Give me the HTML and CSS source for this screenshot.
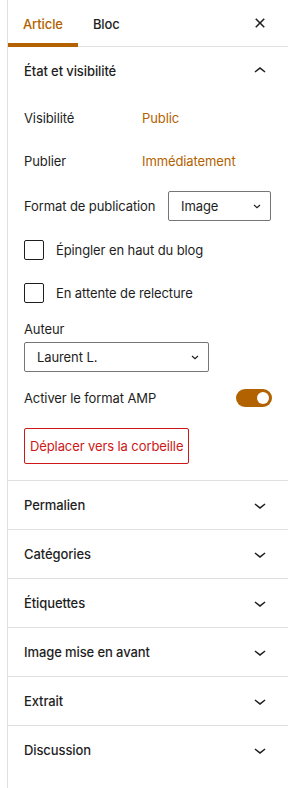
FILE: index.html
```html
<!DOCTYPE html>
<html lang="fr">
<head>
    <meta charset="UTF-8">
    <meta name="viewport" content="width=device-width, initial-scale=1.0">
    <title>Réglages de l'article</title>
    <link rel="stylesheet" href="styles.css">
</head>
<body>
    <div class="sidebar">
        <div class="sidebar-header">
            <button class="tab active">Article</button>
            <button class="tab">Bloc</button>
            <button class="icon-btn close-btn" aria-label="Fermer">
                <svg width="24" height="24" viewBox="0 0 24 24"><path d="M12 13.06l3.712 3.713 1.061-1.06L13.061 12l3.712-3.712-1.06-1.06L12 10.938 8.288 7.227l-1.061 1.06L10.939 12l-3.712 3.712 1.06 1.061L12 13.061z"/></svg>
            </button>
        </div>

        <div class="panel open">
            <div class="panel-title">
                <span>État et visibilité</span>
                <svg width="24" height="24" viewBox="0 0 24 24"><path d="M6.5 12.4L12 8l5.5 4.4-.9 1.2L12 10l-4.6 3.6-.9-1.2z"/></svg>
            </div>
            <div class="panel-body">
                <div class="row row-visibility">
                    <span class="row-label">Visibilité</span>
                    <a class="link" href="#">Public</a>
                </div>
                <div class="row row-publish">
                    <span class="row-label">Publier</span>
                    <a class="link" href="#">Immédiatement</a>
                </div>
                <div class="row row-format">
                    <span class="nowrap">Format de publication</span>
                    <div class="select select-format">
                        <span>Image</span>
                        <svg width="8" height="5" viewBox="0 0 8 5"><path d="M1 1l3 2.6L7 1" fill="none" stroke="#1e1e1e" stroke-width="1.2"/></svg>
                    </div>
                </div>
                <label class="check check-sticky">
                    <span class="check-box"></span>
                    <span>Épingler en haut du blog</span>
                </label>
                <label class="check check-pending">
                    <span class="check-box"></span>
                    <span>En attente de relecture</span>
                </label>
                <div class="field-label">Auteur</div>
                <div class="select select-author">
                    <span>Laurent L.</span>
                    <svg width="8" height="5" viewBox="0 0 8 5"><path d="M1 1l3 2.6L7 1" fill="none" stroke="#1e1e1e" stroke-width="1.2"/></svg>
                </div>
                <div class="row row-amp">
                    <span>Activer le format AMP</span>
                    <span class="toggle"><span class="toggle-thumb"></span></span>
                </div>
                <button class="trash-btn">Déplacer vers la corbeille</button>
            </div>
        </div>

        <div class="panel">
            <div class="panel-title">
                <span>Permalien</span>
                <svg width="24" height="24" viewBox="0 0 24 24"><path d="M17.5 11.6L12 16l-5.5-4.4.9-1.2L12 14l4.6-3.6z"/></svg>
            </div>
        </div>
        <div class="panel">
            <div class="panel-title">
                <span>Catégories</span>
                <svg width="24" height="24" viewBox="0 0 24 24"><path d="M17.5 11.6L12 16l-5.5-4.4.9-1.2L12 14l4.6-3.6z"/></svg>
            </div>
        </div>
        <div class="panel">
            <div class="panel-title">
                <span>Étiquettes</span>
                <svg width="24" height="24" viewBox="0 0 24 24"><path d="M17.5 11.6L12 16l-5.5-4.4.9-1.2L12 14l4.6-3.6z"/></svg>
            </div>
        </div>
        <div class="panel">
            <div class="panel-title">
                <span>Image mise en avant</span>
                <svg width="24" height="24" viewBox="0 0 24 24"><path d="M17.5 11.6L12 16l-5.5-4.4.9-1.2L12 14l4.6-3.6z"/></svg>
            </div>
        </div>
        <div class="panel">
            <div class="panel-title">
                <span>Extrait</span>
                <svg width="24" height="24" viewBox="0 0 24 24"><path d="M17.5 11.6L12 16l-5.5-4.4.9-1.2L12 14l4.6-3.6z"/></svg>
            </div>
        </div>
        <div class="panel last">
            <div class="panel-title">
                <span>Discussion</span>
                <svg width="24" height="24" viewBox="0 0 24 24"><path d="M17.5 11.6L12 16l-5.5-4.4.9-1.2L12 14l4.6-3.6z"/></svg>
            </div>
        </div>
    </div>
</body>
</html>
```

FILE: styles.css
```css
* {
    margin: 0;
    padding: 0;
    box-sizing: border-box;
}

body {
    font-family: Inter, 'Noto Sans', sans-serif;
    font-size: 13px;
    line-height: 16px;
    letter-spacing: -0.1px;
    color: #1e1e1e;
    background: white;
}

button {
    font: inherit;
    letter-spacing: inherit;
    color: inherit;
    background: none;
    border: none;
    cursor: pointer;
}

.nowrap {
    white-space: nowrap;
}

.sidebar {
    margin-left: 7px;
    border-left: 1px solid #e0e0e0;
    min-height: 100vh;
}

/* header with tabs */
.sidebar-header {
    display: flex;
    align-items: center;
    border-bottom: 1px solid #e0e0e0;
    padding-right: 16px;
}

.tab {
    height: 47px;
    margin-bottom: -1px;
    padding: 0 15px;
    font-weight: 500;
}

.tab.active {
    color: #b26200;
    box-shadow: inset 0 -4px 0 #b26200;
}

.close-btn {
    margin-left: auto;
    display: flex;
    margin-top: -1px;
}

svg {
    fill: #1e1e1e;
    display: block;
    flex-shrink: 0;
}

/* panels */
.panel {
    border-bottom: 1px solid #e0e0e0;
}

.panel.last {
    border-bottom: none;
}

.panel-title {
    height: 48px;
    padding: 0 16px;
    display: flex;
    align-items: center;
    justify-content: space-between;
    font-weight: 500;
}

.panel-body {
    padding: 0 16px 16px;
}

.row {
    display: flex;
    align-items: center;
}

.row-label {
    width: 118px;
}

.link {
    color: #b26200;
    text-decoration: none;
}

.row-visibility {
    height: 36px;
    margin-top: 5px;
}

.row-publish {
    height: 36px;
    margin-top: 7px;
}

.row-format {
    margin-top: 12px;
}

.select {
    height: 30px;
    border: 1px solid #757575;
    border-radius: 2px;
    padding: 0 9px 0 12px;
    display: flex;
    align-items: center;
    justify-content: space-between;
    flex-shrink: 0;
}

.select-format {
    width: 103px;
    margin: 0 1px 0 auto;
}

.select-author {
    width: 185px;
    margin-top: 5px;
}

.check {
    display: flex;
    align-items: center;
    gap: 12px;
}

.check-box {
    width: 20px;
    height: 20px;
    border: 1px solid #1e1e1e;
    border-radius: 2px;
}

.check-sticky {
    margin-top: 19px;
}

.check-pending {
    margin-top: 23px;
}

.field-label {
    margin-top: 18px;
}

.row-amp {
    margin-top: 17px;
    justify-content: space-between;
}

.toggle {
    width: 36px;
    height: 18px;
    border-radius: 9px;
    background: #b26200;
    display: flex;
    align-items: center;
    justify-content: flex-end;
    padding-right: 3px;
}

.toggle-thumb {
    width: 12px;
    height: 12px;
    border-radius: 50%;
    background: white;
}

.trash-btn {
    margin-top: 21px;
    height: 36px;
    padding: 0 5px;
    border: 1px solid #cc1818;
    border-radius: 2px;
    color: #cc1818;
}
```
